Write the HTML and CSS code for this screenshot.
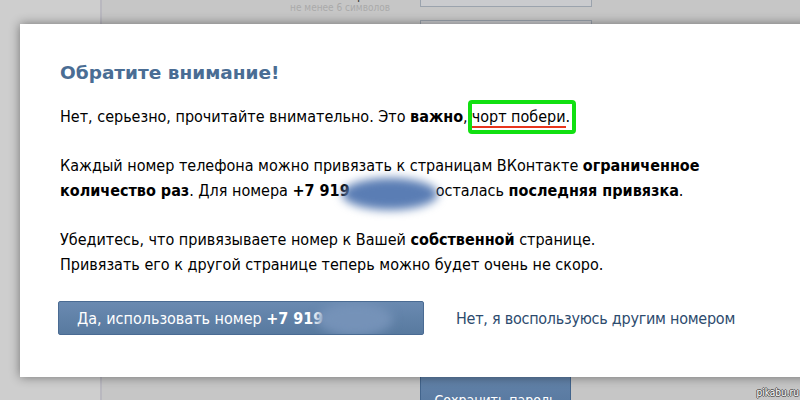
FILE: index.html
```html
<!DOCTYPE html>
<html lang="ru">
    <head>
        <meta charset="UTF-8" />
        <meta name="viewport" content="width=device-width, initial-scale=1.0" />
        <title>Смена пароля</title>
        <link rel="stylesheet" href="styles.css">
    </head>

    <body>
        <div class="page">
            <div class="sidebar"></div>
            <div class="main">
                <div class="form-row first">
                    <div class="label">
                        Новый пароль:
                        <span class="hint">не менее 6 символов</span>
                    </div>
                    <div class="input"></div>
                </div>
                <div class="form-row">
                    <div class="label"></div>
                    <div class="input"></div>
                </div>
                <div class="form-row submit-row">
                    <div class="label"></div>
                    <button class="save-btn">Сохранить пароль</button>
                </div>
            </div>
        </div>

        <!-- Modal -->
        <div class="modal">
            <h2 class="modal-title">Обратите внимание!</h2>
            <p>
                Нет, серьезно, прочитайте внимательно. Это <b>важно</b>,<span class="marked"> <span class="underlined">чорт побери</span>.</span>
            </p>
            <p>
                Каждый номер телефона можно привязать к страницам ВКонтакте <b>ограниченное
                количество раз</b>. Для номера <b>+7 919</b><span class="blur"></span>осталась
                <b>последняя привязка</b>.
            </p>
            <p>
                Убедитесь, что привязываете номер к Вашей <b>собственной</b> странице.<br />
                Привязать его к другой странице теперь можно будет очень не скоро.
            </p>
            <div class="actions">
                <button class="confirm-btn">Да, использовать номер <b>+7 919</b><span class="blur light"></span></button>
                <a class="cancel-link" href="#">Нет, я воспользуюсь другим номером</a>
            </div>
        </div>

        <div class="watermark">pikabu.ru</div>
    </body>
</html>
```

FILE: styles.css
```css
body {
    margin: 0;
    padding: 0;
    width: 800px;
    height: 400px;
    overflow: hidden;
    background-color: #c6c6c6;
    font-family: "DejaVu Sans Condensed", "Liberation Sans Narrow", "DejaVu Sans", sans-serif;
    position: relative;
}

.page {
    display: flex;
    height: 400px;
}

.sidebar {
    width: 100px;
    background-color: #cecece;
    border-right: 2px solid #b9b8bf;
}

.main {
    flex: 1;
    margin-top: -26px;
}

.form-row {
    display: flex;
    align-items: flex-start;
    height: 46px;
}

.form-row .label {
    width: 288px;
    text-align: right;
    padding: 13px 30px 0 0;
    font-size: 13px;
    color: #333;
    line-height: 16px;
}

.hint {
    display: block;
    font-size: 10px;
    line-height: 10px;
    color: #aaa;
}

.input {
    width: 170px;
    height: 31px;
    border: 1px solid #9ba3ad;
    background-color: #cacbce;
}

.submit-row {
    margin-top: 307px;
}

.save-btn {
    width: 151px;
    height: 40px;
    border: 1px solid #42648c;
    border-radius: 2px;
    background: linear-gradient(#6383aa, #56779e);
    color: #fff;
    font-family: inherit;
    font-size: 14px;
    padding: 14px 0 0;
    text-align: center;
}

/* Modal */
.modal {
    position: absolute;
    left: 20px;
    top: 24px;
    width: 800px;
    height: 353px;
    box-sizing: border-box;
    padding: 34px 40px 0;
    background-color: #fff;
    box-shadow: 0 0 10px rgba(0, 0, 0, 0.45);
    color: #000;
    font-size: 16px;
    line-height: 25px;
}

.modal-title {
    margin: 0 0 16px;
    font-family: "DejaVu Sans", sans-serif;
    font-size: 18.5px;
    font-weight: bold;
    color: #4a6d94;
    line-height: 30px;
}

.modal p {
    margin: 0 0 24px;
}

.marked {
    display: inline-block;
    border: 4px solid #11e011;
    border-radius: 4px;
    padding: 0 2px 0 0;
    line-height: 26px;
    margin: -5px 0;
}

.underlined {
    border-bottom: 2px solid #e8341c;
}

.blur {
    display: inline-block;
    width: 96px;
    height: 32px;
    margin: 0 -2px -14px -8px;
    border-radius: 50%;
    background-color: #5a7db4;
    filter: blur(5px);
    vertical-align: 0;
}

.blur.light {
    width: 76px;
    height: 34px;
    background-color: #7592b8;
    margin: -12px 0 -12px -6px;
    vertical-align: middle;
}

.actions {
    display: flex;
    align-items: center;
    margin-top: 12px;
}

.confirm-btn {
    width: 366px;
    height: 34px;
    margin-left: -2px;
    border: 1px solid #4a6b93;
    border-radius: 2px;
    background: linear-gradient(#6a8ab1, #587a9f);
    color: #fff;
    font-family: inherit;
    font-size: 16px;
    text-align: left;
    padding: 0 18px;
    overflow: hidden;
    white-space: nowrap;
}

.cancel-link {
    margin-left: 32px;
    color: #2d4b6e;
    letter-spacing: -0.25px;
    text-decoration: none;
}

.watermark {
    position: absolute;
    right: 1px;
    bottom: 2px;
    font-family: "DejaVu Sans Condensed", sans-serif;
    font-size: 10px;
    color: #fff;
    text-shadow: 1px 0 #555, -1px 0 #555, 0 1px #555, 0 -1px #555;
}
```
